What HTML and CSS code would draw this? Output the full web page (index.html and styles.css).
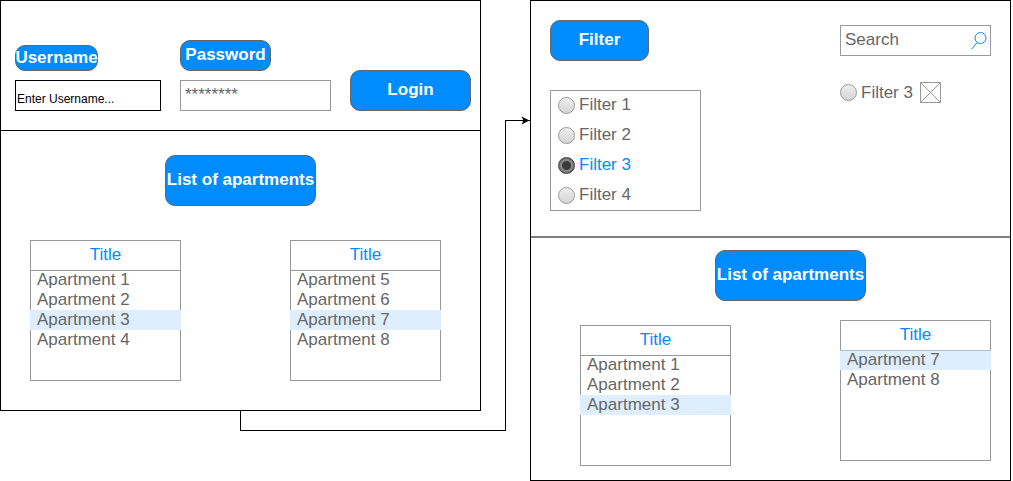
FILE: index.html
```html
<!DOCTYPE html>
<html lang="en">
<head>
<meta charset="utf-8">
<title>Apartments</title>
<link rel="stylesheet" href="styles.css">
</head>
<body>
<main class="board">
  <div class="start">
    <section class="panel">
      <form class="login">
        <div class="field field-user">
          <label class="tag tag-user" for="user">Username</label>
          <input class="box box-user" id="user" type="text" placeholder="Enter Username...">
        </div>
        <div class="field field-pass">
          <label class="tag tag-pass" for="pass">Password</label>
          <input class="box box-pass" id="pass" type="password" placeholder="********">
        </div>
        <button class="btn btn-login" type="button">Login</button>
      </form>
      <div class="results">
        <button class="btn btn-list" type="button">List of apartments</button>
        <div class="lists">
          <section class="list">
            <h2 class="list-title">Title</h2>
            <ul class="rows">
              <li class="row">Apartment 1</li>
              <li class="row">Apartment 2</li>
              <li class="row selected">Apartment 3</li>
              <li class="row">Apartment 4</li>
            </ul>
          </section>
          <section class="list">
            <h2 class="list-title">Title</h2>
            <ul class="rows">
              <li class="row">Apartment 5</li>
              <li class="row">Apartment 6</li>
              <li class="row selected">Apartment 7</li>
              <li class="row">Apartment 8</li>
            </ul>
          </section>
        </div>
      </div>
    </section>
    <div class="link-out"></div>
  </div>

  <div class="link">
    <div class="link-rise"></div>
    <div class="link-in">
      <svg class="arrow" viewBox="0 0 9 9" width="9" height="9" aria-hidden="true"><path d="M0.5 0.5 8.5 4.5 0.5 8.5 2.5 4.5Z"/></svg>
    </div>
  </div>

  <section class="panel">
    <form class="filters">
      <div class="filter-side">
        <button class="btn btn-filter" type="button">Filter</button>
        <div class="options">
          <label class="option"><input class="radio" type="radio" name="filter">Filter 1</label>
          <label class="option"><input class="radio" type="radio" name="filter">Filter 2</label>
          <label class="option chosen"><input class="radio" type="radio" name="filter" checked>Filter 3</label>
          <label class="option"><input class="radio" type="radio" name="filter">Filter 4</label>
        </div>
      </div>
      <div class="search-side">
        <div class="search">
          <input class="box" type="text" placeholder="Search" aria-label="Search">
          <svg class="lens" viewBox="0 0 18 20" width="18" height="20" aria-hidden="true"><circle cx="10.5" cy="7" r="5.500"/><path d="M7.200 11.500 1.500 18.300"/></svg>
        </div>
        <div class="active">
          <label class="active-label"><input class="radio" type="radio" name="active">Filter 3</label>
          <button class="remove" type="button" aria-label="Remove filter">
            <svg viewBox="0 0 21 21" width="21" height="21" aria-hidden="true"><path d="M.5 .5h20v20H.5zM.5 .5l20 20M20.500 .5l-20 20"/></svg>
          </button>
        </div>
      </div>
    </form>
    <div class="results results-filtered">
      <button class="btn btn-list" type="button">List of apartments</button>
      <div class="lists">
        <section class="list list-low">
          <h2 class="list-title">Title</h2>
          <ul class="rows">
            <li class="row">Apartment 1</li>
            <li class="row">Apartment 2</li>
            <li class="row selected">Apartment 3</li>
          </ul>
        </section>
        <section class="list">
          <h2 class="list-title">Title</h2>
          <ul class="rows">
            <li class="row selected">Apartment 7</li>
            <li class="row">Apartment 8</li>
          </ul>
        </section>
      </div>
    </div>
  </section>
</main>
</body>
</html>
```
FILE: styles.css
```css
* {
  box-sizing: border-box;
}

body {
  margin: 0;
  background: #fff;
  color: #666;
  font: 17px/20px "Liberation Sans", Arial, sans-serif;
}

button,
input {
  margin: 0;
  font: inherit;
}

.board {
  display: grid;
  grid-template-columns: 1fr 49px 1fr;
  align-items: start;
  padding-right: 2px;
}

.panel {
  border: 1px solid #000;
}

/* Buttons and labels */
.btn,
.tag {
  border: 1px solid #666;
  border-radius: 10px;
  background: #008cff;
  color: #fff;
  font-weight: bold;
  line-height: 20px;
  text-align: center;
  white-space: nowrap;
}

.btn {
  padding: 0 0 2px;
}

.btn-login {
  flex: 0 0 121px;
  height: 41px;
}

.btn-filter {
  width: 99px;
  height: 41px;
}

.btn-list {
  width: 151px;
  height: 51px;
}

.tag-user {
  width: 83px;
  padding: 2px 0;
  display: flex;
  justify-content: center;
}

.tag-pass {
  width: 91px;
  padding: 4px 0 5px;
}

/* Text boxes */
.box {
  width: 100%;
  height: 31px;
  padding: 0 4px 2px;
  border: 1px solid #999;
  border-radius: 0;
  background: #fff;
  color: #666;
}

.box::placeholder {
  color: #666;
  opacity: 1;
}

.box-user {
  padding: 6px 1px 0;
  border-color: #000;
  font-size: 12px;
}

.box-user::placeholder {
  color: #000;
}

/* Login */
.login {
  display: flex;
  align-items: flex-end;
  gap: 19px;
  padding: 39px 9px 19px 14px;
  border-bottom: 1px solid #000;
}

.field {
  display: flex;
  flex-direction: column;
  align-items: flex-start;
  gap: 9px;
}

.field-user {
  flex: 146 1 0;
}

.field-pass {
  flex: 151 1 0;
}

/* Apartment lists */
.results {
  display: flex;
  flex-direction: column;
  align-items: center;
  gap: 34px;
  padding: 24px 39px 29px 29px;
}

.results .btn-list {
  margin-left: 10px;
}

.results-filtered {
  gap: 19px;
  padding: 12px 19px 14px 49px;
}

.lists {
  display: flex;
  justify-content: space-between;
  align-items: flex-start;
  align-self: stretch;
}

.list {
  width: 151px;
  min-height: 141px;
  border: 1px solid #999;
}

.list-low {
  margin-top: 5px;
}

.list-title {
  margin: 0;
  padding: 4px 0 5px;
  border-bottom: 1px solid #999;
  color: #008cff;
  font-size: 17px;
  font-weight: normal;
  text-align: center;
}

.rows {
  margin: -1px -1px 0;
  padding: 0;
  list-style: none;
}

.row {
  padding: 0 7px;
}

.selected {
  background: #deeeff;
}

.selected:first-child {
  box-shadow: inset 0 1px #b4bec8;
}

/* Connector between the panels */
.link-out {
  height: 20px;
  margin-left: calc(50% - 1px);
  border-left: 1px solid #000;
  border-bottom: 1px solid #000;
}

.link {
  display: flex;
  align-items: flex-start;
  padding-top: 120px;
}

.link-rise {
  flex: 0 0 25px;
  height: 311px;
  border: solid #000;
  border-width: 0 1px 1px 0;
}

.link-in {
  display: flex;
  flex: 1;
  justify-content: flex-end;
  height: 1px;
  background: #000;
}

.arrow {
  flex: none;
  margin-top: -4px;
}

/* Filters */
.filters {
  display: flex;
  justify-content: space-between;
  align-items: flex-start;
  padding: 19px 19px 25px;
  border-bottom: 2px solid #808080;
}

.filter-side {
  display: grid;
  gap: 29px;
}

.options {
  width: 151px;
  border: 1px solid #999;
  padding: 0 7px;
}

.option {
  display: flex;
  align-items: center;
  gap: 4px;
  height: 30px;
  padding-bottom: 2px;
}

.option:last-child {
  height: 29px;
}

.chosen {
  color: #008cff;
}

.radio {
  appearance: none;
  width: 17px;
  height: 17px;
  border: 1px solid #999;
  border-radius: 50%;
  background: linear-gradient(#eee, #d4d4d4);
}

.option .radio {
  margin-top: 1px;
}

.radio:checked {
  border-color: #444;
  background: radial-gradient(circle, #3a3a3a 0 4px, #888 5px 6px, #555 8px);
}

.search-side {
  width: 151px;
  padding-top: 5px;
}

.search {
  display: flex;
  position: relative;
}

.lens {
  position: absolute;
  top: 6px;
  right: 3px;
  fill: none;
  stroke: #008cff;
}

.active {
  display: flex;
  align-items: center;
  gap: 7px;
  margin-top: 26px;
}

.active-label {
  display: flex;
  align-items: center;
  gap: 4px;
}

.remove {
  display: flex;
  padding: 0;
  border: 0;
  background: #fff;
  fill: none;
  stroke: #999;
}
```
